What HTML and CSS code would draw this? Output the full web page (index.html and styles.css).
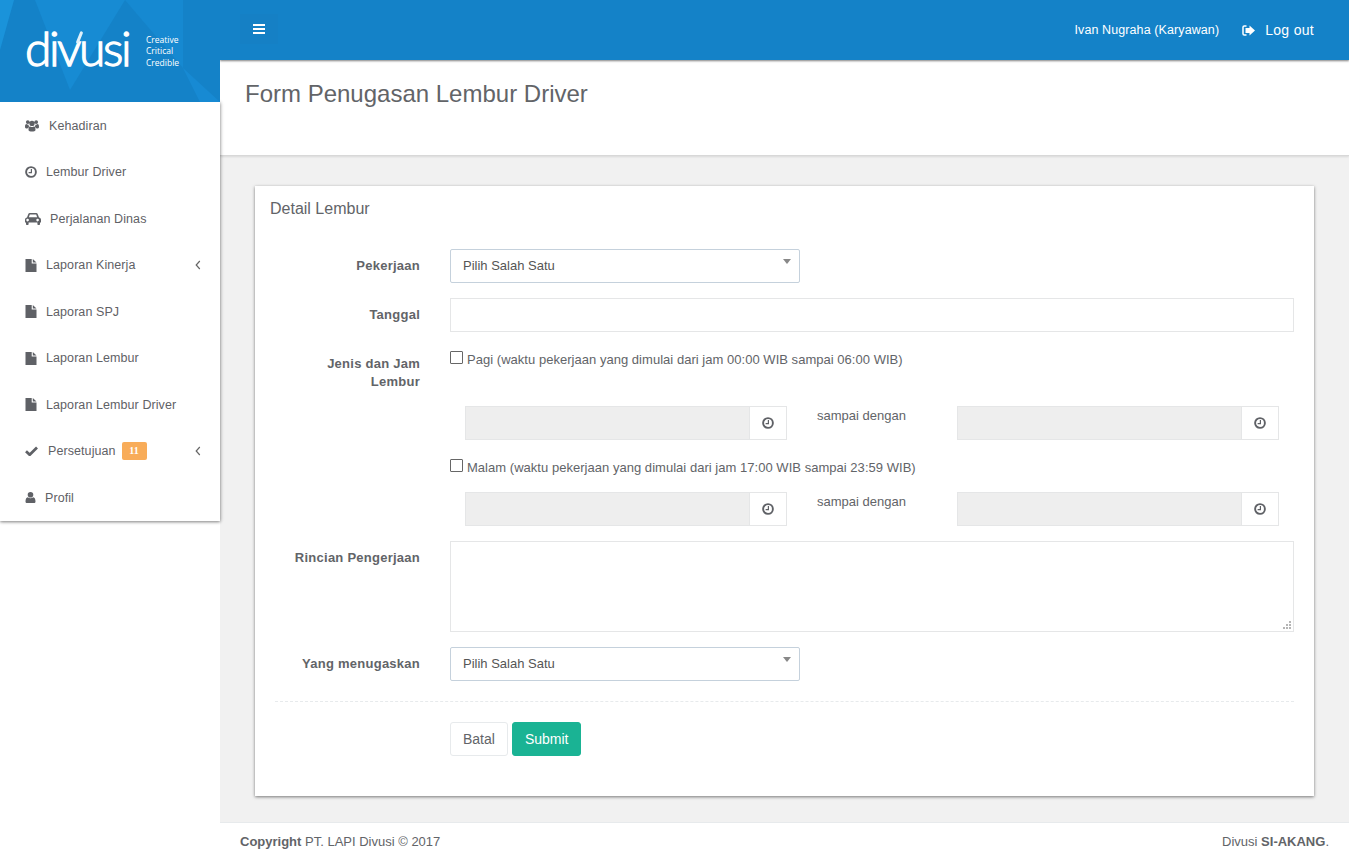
FILE: index.html
```html
<!DOCTYPE html>
<html lang="id">
<head>
<meta charset="utf-8">
<title>Form Penugasan Lembur Driver</title>
<link rel="stylesheet" href="styles.css">
</head>
<body>
<svg class="defs" width="0" height="0">
  <defs>
    <symbol id="i-clock" viewBox="0 0 12 12"><circle cx="6" cy="6" r="4.9" fill="none" stroke="currentColor" stroke-width="1.9"/><path d="M6.4 3v3.6H3.6" fill="none" stroke="currentColor" stroke-width="1.2"/></symbol>
    <symbol id="i-file" viewBox="0 0 11 13"><path d="M0 0h6.2v4.600H11V13H0zM7.300 0 11 3.600H7.300z" fill="currentColor"/></symbol>
  </defs>
</svg>
<aside class="sidebar">
  <div class="brand">
    <svg class="brand-bg" viewBox="0 0 220 102" preserveAspectRatio="none" aria-hidden="true">
      <path d="M0 0h14L0 50z" fill="#1a93da"/>
      <path d="M35 0h90L70 90z" fill="#178bd3"/>
      <path d="M125 0h58v68z" fill="#1689d1"/>
      <path d="M183 68 220 102h-20z" fill="#178ad3"/>
    </svg>
    <span class="logo">divusi</span>
    <span class="tagline">Creative<br>Critical<br>Credible</span>
  </div>
  <nav class="menu">
    <a class="item"><svg class="ic ic-users" viewBox="0 0 15 13"><path d="M3 .8a2 2 0 1 1 0 4 2 2 0 0 1 0-4zm9 0a2 2 0 1 1 0 4 2 2 0 0 1 0-4zM7.500 1.500a2.800 2.800 0 1 1 0 5.600 2.800 2.800 0 0 1 0-5.600zM0 8c0-2 .5-3 1.600-3 .6.500 1.600.9 2.400.6-.3.7 0 2 .8 2.500-1.200.4-1.900 1-2.200 1.600C1 9.700 0 9.200 0 8zm15 0c0 1.200-1 1.700-2.600 1.700-.3-.6-1-1.200-2.200-1.600.8-.5 1.100-1.800.8-2.500.8.3 1.800-.1 2.400-.6C14.500 5 15 6 15 8zM3.800 11.500c-.4-2 .5-4 1.800-4 1 .9 2.800.9 3.800 0 1.300 0 2.200 2 1.800 4-.1 1-1.800 1.500-3.700 1.500s-3.600-.5-3.700-1.500z" fill="currentColor"/></svg><span>Kehadiran</span></a>
    <a class="item"><svg class="ic ic-clock"><use href="#i-clock"/></svg><span>Lembur Driver</span></a>
    <a class="item"><svg class="ic ic-car" viewBox="0 0 16 12"><path fill-rule="evenodd" d="M3.200 1.200C3.500.4 4 0 4.800 0h6.400c.8 0 1.300.4 1.600 1.200L14 4.400c1.200.3 2 1.200 2 2.400v2.700h-1V11c0 .6-.4 1-1 1h-.6c-.6 0-1-.4-1-1V9.500H3.600V11c0 .6-.4 1-1 1H2c-.6 0-1-.4-1-1V9.500H0V6.800c0-1.200.8-2.100 2-2.400zM4.800 1.500 3.900 4.200h8.200l-.9-2.700zM3 5.800a1.300 1.300 0 1 0 0 2.500 1.300 1.300 0 0 0 0-2.500zm10 0a1.300 1.300 0 1 0 0 2.500 1.300 1.300 0 0 0 0-2.500z" fill="currentColor"/></svg><span>Perjalanan Dinas</span></a>
    <a class="item"><svg class="ic ic-file"><use href="#i-file"/></svg><span>Laporan Kinerja</span><svg class="chev" viewBox="0 0 6 10"><path d="M4.800 1 1.200 5l3.600 4" fill="none" stroke="currentColor" stroke-width="1.200"/></svg></a>
    <a class="item"><svg class="ic ic-file"><use href="#i-file"/></svg><span>Laporan SPJ</span></a>
    <a class="item"><svg class="ic ic-file"><use href="#i-file"/></svg><span>Laporan Lembur</span></a>
    <a class="item"><svg class="ic ic-file"><use href="#i-file"/></svg><span>Laporan Lembur Driver</span></a>
    <a class="item"><svg class="ic ic-check" viewBox="0 0 13 10"><path d="M1 5.200 4.700 8.800 12 1.500" fill="none" stroke="currentColor" stroke-width="2.700"/></svg><span>Persetujuan</span><b class="badge">11</b><svg class="chev" viewBox="0 0 6 10"><path d="M4.800 1 1.200 5l3.600 4" fill="none" stroke="currentColor" stroke-width="1.200"/></svg></a>
    <a class="item"><svg class="ic ic-user" viewBox="0 0 10 11"><path d="M5 0a2.800 2.800 0 1 1 0 5.600A2.800 2.800 0 0 1 5 0zM0 9.500C0 7.300.8 5.500 2.200 5.300c1.600 1.300 4 1.300 5.600 0C9.200 5.500 10 7.300 10 9.500c0 1-.7 1.500-1.600 1.500H1.600C.7 11 0 10.500 0 9.500z" fill="currentColor"/></svg><span>Profil</span></a>
  </nav>
</aside>
<div class="main">
  <header class="topbar">
    <button class="burger" type="button" aria-label="Menu"><i></i><i></i><i></i></button>
    <div class="user">
      <span>Ivan Nugraha (Karyawan)</span>
      <a class="logout"><svg class="ic-out" viewBox="0 0 13 11"><path d="M4.500 1H2.300C1.500 1 1 1.500 1 2.300v6.400C1 9.500 1.500 10 2.300 10h2.200" fill="none" stroke="currentColor" stroke-width="1.500"/><path d="M7.500.5 13 5.500l-5.500 5V8H3.500V3h4z" fill="currentColor"/></svg><span>Log out</span></a>
    </div>
  </header>
  <section class="pagehead"><h1>Form Penugasan Lembur Driver</h1></section>
  <section class="content">
    <div class="panel">
      <h2>Detail Lembur</h2>
      <form class="form">
        <div class="row">
          <label class="lbl">Pekerjaan</label>
          <div class="select"><span>Pilih Salah Satu</span><i class="caret"></i></div>
        </div>
        <div class="row">
          <label class="lbl">Tanggal</label>
          <div class="input"></div>
        </div>
        <div class="row row-jenis">
          <label class="lbl lbl-top">Jenis dan Jam Lembur</label>
          <div class="times">
            <div class="check check-first"><i class="box"></i><span>Pagi (waktu pekerjaan yang dimulai dari jam 00:00 WIB sampai 06:00 WIB)</span></div>
            <div class="timerow">
              <div class="timefield"><div class="fill"></div><div class="addon"><svg class="ic-clock"><use href="#i-clock"/></svg></div></div>
              <span class="until">sampai dengan</span>
              <div class="timefield"><div class="fill"></div><div class="addon"><svg class="ic-clock"><use href="#i-clock"/></svg></div></div>
            </div>
            <div class="check check-second"><i class="box"></i><span>Malam (waktu pekerjaan yang dimulai dari jam 17:00 WIB sampai 23:59 WIB)</span></div>
            <div class="timerow">
              <div class="timefield"><div class="fill"></div><div class="addon"><svg class="ic-clock"><use href="#i-clock"/></svg></div></div>
              <span class="until">sampai dengan</span>
              <div class="timefield"><div class="fill"></div><div class="addon"><svg class="ic-clock"><use href="#i-clock"/></svg></div></div>
            </div>
          </div>
        </div>
        <div class="row">
          <label class="lbl lbl-area">Rincian Pengerjaan</label>
          <div class="textarea"><svg class="grip" viewBox="0 0 9 9"><path d="M7 1h2v2H7zM4 4h2v2H4zM7 4h2v2H7zM1 7h2v2H1zM4 7h2v2H4zM7 7h2v2H7z" fill="#b5b5b5"/></svg></div>
        </div>
        <div class="row">
          <label class="lbl">Yang menugaskan</label>
          <div class="select"><span>Pilih Salah Satu</span><i class="caret"></i></div>
        </div>
        <div class="divider"></div>
        <div class="actions">
          <button class="btn" type="button">Batal</button>
          <button class="btn btn-primary" type="button">Submit</button>
        </div>
      </form>
    </div>
  </section>
  <footer class="footer">
    <span><b>Copyright</b> PT. LAPI Divusi © 2017</span>
    <span>Divusi <b>SI-AKANG</b>.</span>
  </footer>
</div>
</body>
</html>
```
FILE: styles.css
```css
* { box-sizing: border-box; }
html, body { height: 100%; }
body {
  margin: 0;
  display: flex;
  height: 861px;
  overflow: hidden;
  background: #fff;
  color: #626468;
  font-family: "Liberation Sans", Arial, sans-serif;
  font-size: 13px;
  line-height: 18px;
}
.defs { position: absolute; }

/* sidebar */
.sidebar { width: 220px; flex: none; position: relative; z-index: 3; }
.brand {
  position: relative;
  height: 102px;
  background: #1482c8;
  overflow: hidden;
  display: flex;
  align-items: center;
  padding-left: 25px;
  color: #fff;
}
.brand-bg { position: absolute; left: 0; top: 0; width: 100%; height: 100%; }
.logo {
  position: relative;
  font-family: Lato, sans-serif;
  font-weight: 300;
  font-size: 48px;
  line-height: 52px;
  letter-spacing: -2.4px;
  width: 121px;
  flex: none;
  margin-top: -6px;
  -webkit-text-stroke: 1.300px #fff;
}
.logo::after {
  content: "";
  position: absolute;
  left: 53px;
  top: 9px;
  width: 3px;
  height: 13px;
  background: #dff0fa;
  border-radius: 2px;
  transform: rotate(22deg);
}
.tagline {
  position: relative;
  font-family: "Open Sans", sans-serif;
  font-size: 8.500px;
  line-height: 11.500px;
}
.menu {
  background: #fff;
  box-shadow: 0 1px 3px rgba(0,0,0,.45), 1px 0 4px rgba(0,0,0,.12);
  padding-top: .5px;
}
.item {
  height: 46.5px;
  display: flex;
  align-items: center;
  padding: 0 19px 0 25px;
  gap: 10px;
  font-size: 12.500px;
  letter-spacing: .08px;
  color: #5f6166;
}
.ic { flex: none; color: #5f6166; }
.ic-users { width: 14px; height: 13px; }
.ic-clock { width: 12px; height: 12px; color: #5f6166; }
.item .ic-clock { margin-right: -1px; }
.ic-car { width: 16px; height: 12px; margin-right: -1px; }
.ic-file { width: 12px; height: 13px; margin-right: -1px; }
.ic-check { width: 13px; height: 10px; }
.ic-user { width: 11px; height: 11px; margin-right: -1px; }
.chev { width: 6px; height: 10px; margin-left: auto; color: #666; }
.badge {
  background: #f8ac59;
  color: #fff;
  font-family: "Liberation Serif", serif;
  font-size: 10px;
  line-height: 18px;
  width: 25px;
  height: 18px;
  border-radius: 2px;
  text-align: center;
  margin-left: -4px;
}

/* main */
.main { flex: 1; min-width: 0; display: flex; flex-direction: column; background: #f1f1f1; }
.topbar {
  height: 60px;
  flex: none;
  display: flex;
  justify-content: space-between;
  align-items: center;
  background: #1482c8;
  color: #fff;
  position: relative;
  z-index: 2;
  box-shadow: 0 1px 2px rgba(0,0,0,.5);
  padding: 0 35px 0 20px;
}
.burger {
  width: 38px;
  height: 30px;
  margin-top: -2px;
  border: 0;
  padding: 0 13px;
  background: #1580c5;
  display: flex;
  flex-direction: column;
  justify-content: center;
  gap: 2px;
}
.burger i { display: block; height: 2px; background: #fff; }
.user { display: flex; align-items: center; gap: 23px; font-size: 12.500px; letter-spacing: .1px; }
.logout { display: flex; align-items: center; gap: 10px; font-size: 14px; letter-spacing: .3px; }
.ic-out { width: 13px; height: 11px; }
.pagehead {
  height: 96px;
  flex: none;
  background: #fff;
  border-bottom: 1px solid #d8d8d8;
  box-shadow: 0 1px 2px rgba(0,0,0,.1);
  padding: 20px 25px 0;
}
h1 { margin: 0; font-size: 24px; line-height: 27px; font-weight: 400; color: #626468; }
.content { flex: 1; padding: 30px 35px 0 35px; }
.panel {
  background: #fff;
  height: 610px;
  width: 1059px;
  box-shadow: 0 1px 3px rgba(0,0,0,.5);
  padding: 14px 20px 0 15px;
}
h2 { margin: 0 0 31px; font-size: 16px; line-height: 18px; font-weight: 400; color: #626468; }
.form { padding-left: 5px; }
.row { display: grid; grid-template-columns: 145px 1fr; column-gap: 30px; align-items: center; margin-bottom: 15px; }
.lbl { font-weight: 700; text-align: right; letter-spacing: .25px; font-size: 13px; }
.lbl-top { align-self: start; padding-top: 8px; padding-left: 30px; }
.lbl-area { align-self: start; padding-top: 8px; }
.select {
  width: 350px;
  height: 34px;
  border: 1px solid #c5d1dc;
  border-radius: 2px;
  position: relative;
  display: flex;
  align-items: center;
  padding: 0 12px;
  font-size: 13px;
  color: #555;
}
.caret {
  position: absolute;
  right: 8px;
  top: 9px;
  border: 4px solid transparent;
  border-top: 5px solid #888;
  border-bottom: 0;
}
.input { height: 34px; border: 1px solid #e5e6e7; }
.check { display: flex; align-items: flex-start; gap: 4px; font-size: 13px; letter-spacing: .03px; }
.check-first { height: 59px; padding-top: 4px; }
.check-second { height: 52px; padding-top: 19px; }
.box { width: 13px; height: 13px; border: 1px solid #666; flex: none; border-radius: 1px; }
.timerow { display: grid; grid-template-columns: 322px 170px 322px; padding-left: 15px; }
.timefield { display: flex; height: 34px; }
.fill { flex: 1; background: #eee; border: 1px solid #e5e6e7; border-right: 0; }
.addon { width: 38px; flex: none; border: 1px solid #e5e6e7; display: flex; align-items: center; justify-content: center; }
.until { padding: 1px 0 0 30px; font-size: 13px; }
.textarea { height: 91px; border: 1px solid #e5e6e7; position: relative; }
.grip { position: absolute; right: 2px; bottom: 2px; width: 9px; height: 9px; }
.divider { border-top: 1px dashed #e7eaec; margin: 20px 0 20px; }
.actions { padding-left: 175px; display: flex; gap: 4px; }
.btn {
  height: 34px;
  padding: 0 12px;
  border: 1px solid #e7eaec;
  border-radius: 3px;
  background: #fff;
  color: #626468;
  font-family: inherit;
  font-size: 14px;
}
.btn-primary { background: #1ab394; border-color: #1ab394; color: #fff; padding: 0 11.500px 0 12px; }
.footer {
  height: 39px;
  flex: none;
  background: #fff;
  border-top: 1px solid #e7eaec;
  display: flex;
  justify-content: space-between;
  align-items: center;
  padding: 0 20px;
  font-size: 13px;
}
```
